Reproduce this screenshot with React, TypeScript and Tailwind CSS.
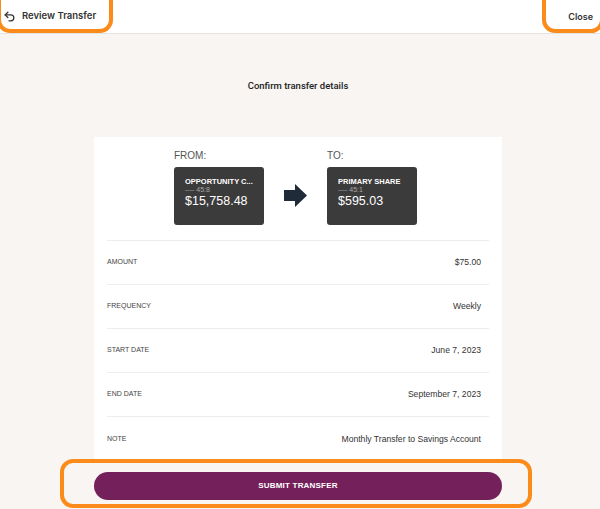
import React from 'react';

const rows = [
  { label: 'AMOUNT', value: '$75.00' },
  { label: 'FREQUENCY', value: 'Weekly' },
  { label: 'START DATE', value: 'June 7, 2023' },
  { label: 'END DATE', value: 'September 7, 2023' },
  { label: 'NOTE', value: 'Monthly Transfer to Savings Account' },
];

const AccountTile = ({ title, name, mask, balance }: { title: string; name: string; mask: string; balance: string }) => (
  <div className="flex flex-col">
    <span className="text-[10px] leading-[12px] text-[#555] mb-[5px]">{title}</span>
    <div className="w-[90px] h-[58px] rounded-[3px] bg-[#3c3b3b] pl-[11px] pt-[10px] flex flex-col">
      <span className="text-[7.5px] leading-[9px] font-bold text-white whitespace-nowrap">{name}</span>
      <span className="text-[7px] leading-[7px] text-[#a8a8a8]">{mask}</span>
      <span className="text-[12.5px] leading-[16px] text-white">{balance}</span>
    </div>
  </div>
);

const App = () => {
  return (
    <div className="relative w-[600px] h-[509px] overflow-hidden bg-[#f8f5f3] font-['Liberation_Sans',Arial,sans-serif] text-[#333]">
      <header className="h-[34px] bg-white border-b border-[#e6e2df] flex items-center justify-between">
        <div className="flex items-center pl-[3px] gap-[6px]">
          <svg width="13" height="13" viewBox="0 0 24 24" fill="none" stroke="#333" strokeWidth="2.4" strokeLinecap="round" strokeLinejoin="round">
            <path d="M9 14 4 9l5-5" />
            <path d="M4 9h10.5a5.5 5.5 0 0 1 0 11H11" />
          </svg>
          <span className="text-[9.5px] font-semibold font-['Inter',sans-serif] text-[#333]">Review Transfer</span>
        </div>
        <span className="pr-[7px] text-[9px] font-semibold font-['Inter',sans-serif] text-[#333]">Close</span>
      </header>

      <div className="flex justify-center pt-[45px] ml-[-4px]">
        <span className="text-[9.5px] leading-[14px] font-medium font-['Roboto',sans-serif] text-[#222]">Confirm transfer details</span>
      </div>

      <div className="ml-[94px] mt-[44px] w-[408px] bg-white px-[13px]">
        <div className="flex items-end gap-[20px] pl-[67px] pt-[13px] pb-[15px] border-b border-[#f0ecea]">
          <AccountTile title="FROM:" name="OPPORTUNITY C..." mask="---- 45:8" balance="$15,758.48" />
          <svg width="23" height="23" viewBox="0 0 23 23" className="mb-[18px]">
            <path d="M0 6h11V0l12 11.5L11 23v-6H0z" fill="#1f2b38" />
          </svg>
          <AccountTile title="TO:" name="PRIMARY SHARE" mask="---- 45:1" balance="$595.03" />
        </div>
        {rows.map((r, i) => (
          <div
            key={r.label}
            className={`flex items-center justify-between h-[44px] ${i < rows.length - 1 ? 'border-b border-[#f0ecea]' : ''}`}
          >
            <span className="text-[7px] text-[#444]">{r.label}</span>
            <span className="text-[8.6px] text-[#333] pr-[8px]">{r.value}</span>
          </div>
        ))}
      </div>

      <div className="ml-[94px] pt-[10px]">
        <button className="w-[408px] h-[28px] rounded-full bg-[#74205a] text-white text-[8px] font-bold tracking-[0.2px]">
          SUBMIT TRANSFER
        </button>
      </div>

      <div className="absolute left-[-3px] top-[-12px] w-[116px] h-[45px] rounded-[13px] border-[4px] border-[#fb8c1c]" />
      <div className="absolute left-[542px] top-[-12px] w-[62px] h-[45px] rounded-[13px] border-[4px] border-[#fb8c1c]" />
      <div className="absolute left-[60px] top-[459px] w-[472px] h-[49px] rounded-[13px] border-[4px] border-[#fb8c1c]" />
    </div>
  );
};

export default App;
